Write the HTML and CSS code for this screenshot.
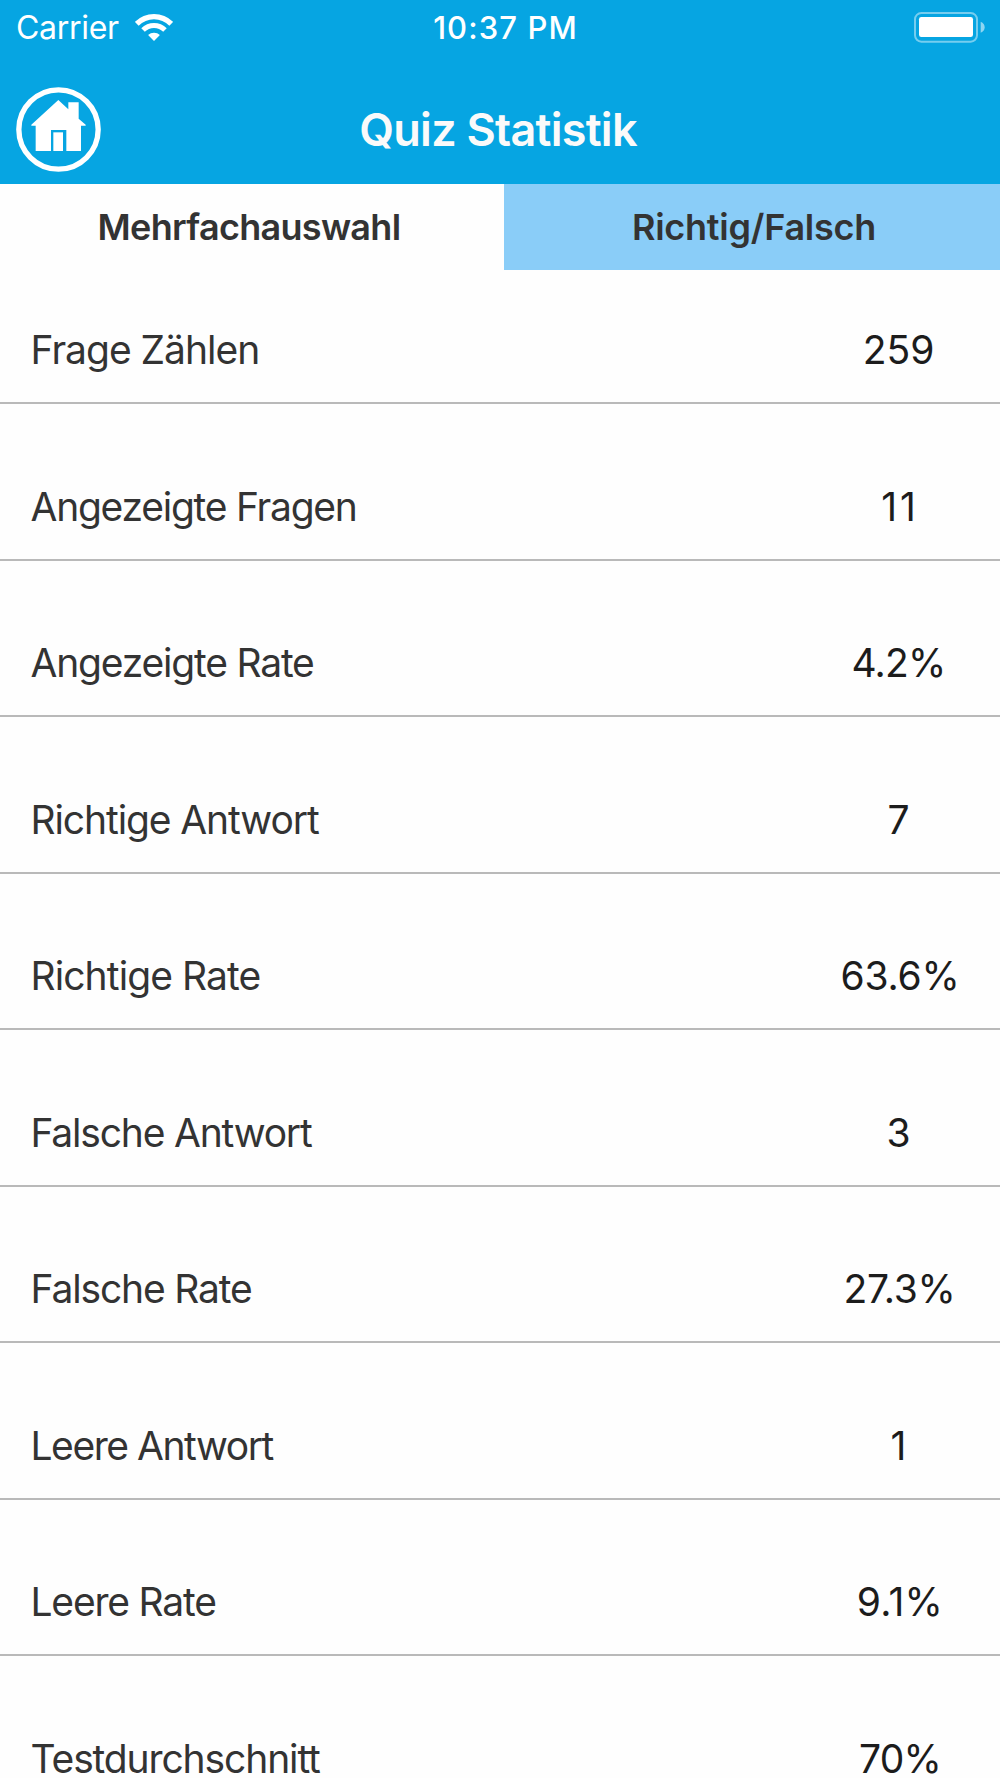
FILE: index.html
```html
<!DOCTYPE html>
<html lang="de">
<head>
<meta charset="utf-8">
<title>Quiz Statistik</title>
<link rel="stylesheet" href="styles.css">
</head>
<body>
<div class="screen">
  <header class="header">
    <div class="status-bar">
      <div class="network">
        <span class="carrier">Carrier</span>
        <svg class="wifi" viewBox="403 36 114 87" fill="#fff" aria-hidden="true">
          <path d="M402.700 62.700A81 81 0 0 1 517.300 62.700L506 74A65 65 0 0 0 414 74Z"/>
          <path d="M421.800 81.800A54 54 0 0 1 498.200 81.800L487.600 92.400A39 39 0 0 0 432.400 92.400Z"/>
          <path d="M442.300 102.300A25 25 0 0 1 477.700 102.300L460 120Z"/>
        </svg>
      </div>
      <time class="clock">10:37 PM</time>
      <svg class="battery" viewBox="735 36 213 93" aria-hidden="true">
        <rect x="738" y="39" width="186" height="86" rx="19" fill="none" stroke="#fff" stroke-opacity=".45" stroke-width="6"/>
        <rect x="750" y="51" width="162" height="60" rx="7" fill="#fff"/>
        <path d="M935 65C951 70 951 93 935 98Z" fill="#fff" fill-opacity=".55"/>
      </svg>
    </div>
    <div class="nav-bar">
      <svg class="home" viewBox="49 261 255 255" fill="#fff" role="img" aria-label="Start">
        <circle cx="176.500" cy="388.500" r="119" fill="none" stroke="#fff" stroke-width="16"/>
        <path d="M176 300L206 328V307H237V356L258 374V377H244V453H200V390H154V453H108V377H95V374Z"/>
        <path d="M161 397H190V453H161Z"/>
      </svg>
      <h1 class="title">Quiz Statistik</h1>
    </div>
  </header>
  <nav class="tabs">
    <div class="tab tab-active">Mehrfachauswahl</div>
    <div class="tab tab-alt">Richtig/Falsch</div>
  </nav>
  <main class="stats">
    <div class="row"><span class="label">Frage Zählen</span><span class="value">259</span></div>
    <div class="row"><span class="label">Angezeigte Fragen</span><span class="value">11</span></div>
    <div class="row"><span class="label">Angezeigte Rate</span><span class="value">4.2%</span></div>
    <div class="row"><span class="label">Richtige Antwort</span><span class="value">7</span></div>
    <div class="row"><span class="label">Richtige Rate</span><span class="value">63.6%</span></div>
    <div class="row"><span class="label">Falsche Antwort</span><span class="value">3</span></div>
    <div class="row"><span class="label">Falsche Rate</span><span class="value">27.3%</span></div>
    <div class="row"><span class="label">Leere Antwort</span><span class="value">1</span></div>
    <div class="row"><span class="label">Leere Rate</span><span class="value">9.1%</span></div>
    <div class="row"><span class="label">Testdurchschnitt</span><span class="value">70%</span></div>
  </main>
</div>
</body>
</html>
```
FILE: styles.css
```css
* { box-sizing: border-box; }

body {
  margin: 0;
  background: #fefefe;
  font-family: Inter, "Liberation Sans", sans-serif;
  color: #333;
}

.screen {
  display: flex;
  flex-direction: column;
  width: 1000px;
  height: 1778px;
  overflow: hidden;
}

.header {
  flex: none;
  height: 183.5px;
  background: #06a5e2;
  color: #fff;
}

.status-bar {
  display: grid;
  grid-template-columns: 1fr auto 1fr;
  height: 75px;
  padding: 1px 15px 20px 16px;
  align-items: center;
  line-height: 54px;
}

.network { display: flex; align-items: center; gap: 16px; }
.carrier { font-size: 32px; letter-spacing: -.3px; }
.wifi { width: 38px; height: 29px; margin-top: -2px; }
.clock { padding-left: 10px; font-size: 31px; font-weight: 550; letter-spacing: 1.1px; }
.battery { justify-self: end; width: 71px; height: 31px; margin-top: -1px; }

.nav-bar {
  display: grid;
  grid-template-columns: 1fr auto 1fr;
  align-items: center;
  height: 108.5px;
  padding: 0 20px 0 16px;
}

.home { width: 85px; height: 85px; }
.title { margin: 0; padding-top: 1px; font-size: 45px; font-weight: 600; line-height: 54px; letter-spacing: -.73px; color: #fafafa; }

.tabs {
  flex: none;
  display: grid;
  grid-template-columns: 504px 1fr;
  height: 86.5px;
}

.tab {
  padding-top: 5px;
  font-size: 36px;
  font-weight: 600;
  line-height: 77px;
  text-align: center;
}

.tab-active { padding-right: 6px; letter-spacing: -.7px; background: #fefefe; }
.tab-alt { padding-left: 4px; letter-spacing: -.25px; background: #8acdf8; }

.row {
  display: flex;
  justify-content: space-between;
  align-items: flex-end;
  height: 156.5px;
  padding: 0 0 28px 30.5px;
  border-bottom: 2px solid #b9b9b9;
  font-size: 39px;
  line-height: 48px;
  letter-spacing: -1.2px;
}

.row:first-child { height: 134px; letter-spacing: -1px; }
.row:nth-child(2) { letter-spacing: -1.25px; }
.row:nth-child(4) { letter-spacing: -1.1px; }
.row:nth-child(5) { letter-spacing: -.9px; }
.row:nth-child(7) { letter-spacing: -1.15px; }
.row:nth-child(8) { letter-spacing: -1.45px; }
.row:nth-child(10) { letter-spacing: -1.12px; }

.value {
  width: 203px;
  text-align: center;
  letter-spacing: 0;
  color: #1c1c1c;
}

.row:nth-child(2) .value { padding-left: 3px; letter-spacing: 3px; }
.row:nth-child(3) .value { letter-spacing: -.8px; }
.row:nth-child(5) .value { padding-left: 3px; letter-spacing: -.2px; }
.row:nth-child(7) .value { padding-left: 2px; letter-spacing: -.3px; }
.row:nth-child(9) .value { padding-left: 3px; letter-spacing: .3px; }
.row:nth-child(10) .value { padding-left: 3px; letter-spacing: -.8px; }
```
